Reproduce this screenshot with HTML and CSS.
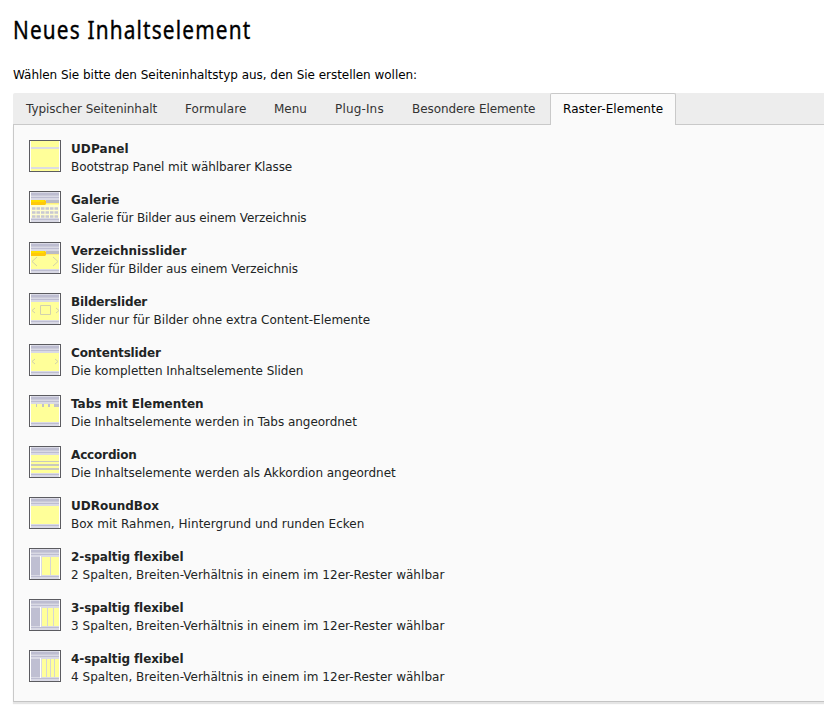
FILE: index.html
```
<!DOCTYPE html>
<html lang="de">
<head>
<meta charset="utf-8">
<title>Neues Inhaltselement</title>
<link rel="stylesheet" href="styles.css">
</head>
<body>
<svg class="defs" aria-hidden="true">
  <defs>
    <g id="frame">
      <rect x=".5" y=".5" width="31" height="31" fill="#fff" stroke="#5b5b60"/>
      <path fill="#d9d9e5" d="M2 1h28v30H2z"/>
      <path fill="#bdbdd1" d="M2 2h28v2H2zM2 6h28v1H2zM2 28h28v1H2z"/>
      <path fill="#cacad8" d="M2 4h28v1H2z"/>
    </g>
    <g id="page">
      <use href="#frame"/>
      <path fill="#ffff99" d="M2 9h28v18H2z"/>
    </g>
    <g id="folder">
      <path fill="#bbbbc5" d="M17 9h13v3H17z"/>
      <path fill="#ffee80" d="M2 12h28v1H2z"/>
      <path fill="#ffc90b" d="M2 9h14l1 1v3l-1 1H2z"/>
      <path fill="#ffe000" d="M2 9h13v2H2z"/>
    </g>
    <g id="columns">
      <use href="#frame"/>
      <path fill="#bfbfd2" d="M2 9h9v18H2z"/>
      <path fill="#fff" d="M11 8h1v20h-1z"/>
      <path fill="#ffff99" d="M13 9h17v18H13z"/>
    </g>
  </defs>
</svg>
<h1>Neues Inhaltselement</h1>
<p class="intro">Wählen Sie bitte den Seiteninhaltstyp aus, den Sie erstellen wollen:</p>
<nav class="tabs">
  <a class="tab t1">Typischer Seiteninhalt</a>
  <a class="tab t2">Formulare</a>
  <a class="tab t3">Menu</a>
  <a class="tab t4">Plug-Ins</a>
  <a class="tab t5">Besondere Elemente</a>
  <a class="tab active">Raster-Elemente</a>
</nav>
<main class="panel">
  <div class="item"><svg class="icon" viewBox="0 0 32 32"><rect x=".5" y=".5" width="31" height="31" fill="#fff" stroke="#5b5b60"/><path fill="#ffff99" d="M2 1h28v30H2z"/><path fill="#dcdce2" d="M2 7h28v2H2zM2 27h28v2H2z"/></svg><div><b class="loose">UDPanel</b><span class="tight">Bootstrap Panel mit wählbarer Klasse</span></div></div>
  <div class="item"><svg class="icon" viewBox="0 0 32 32"><use href="#page"/><path fill="#fffdd0" d="M2 14h28v13H2z"/><use href="#folder"/><path d="M3 17.500h27M3 21.500h27M3 25.500h27" stroke="#c8c8d2" stroke-width="2.500" stroke-dasharray="3.500 1"/></svg><div><b>Galerie</b><span class="tighter">Galerie für Bilder aus einem Verzeichnis</span></div></div>
  <div class="item"><svg class="icon" viewBox="0 0 32 32"><use href="#page"/><use href="#folder"/><path d="M8 15l-5 4.500 5 4.500M24 15l5 4.500-5 4.500" fill="none" stroke="#d1d1ae"/></svg><div><b>Verzeichnisslider</b><span class="tighter">Slider für Bilder aus einem Verzeichnis</span></div></div>
  <div class="item"><svg class="icon" viewBox="0 0 32 32"><use href="#page"/><path d="M6 15l-3 2.500L6 20M27 15l3 2.500-3 2.500M11.500 12.500h10v9h-10z" fill="none" stroke="#d1d1ae"/></svg><div><b class="snug">Bilderslider</b><span>Slider nur für Bilder ohne extra Content-Elemente</span></div></div>
  <div class="item"><svg class="icon" viewBox="0 0 32 32"><use href="#page"/><path d="M6 15l-3 2.500L6 20M26 15l3 2.500-3 2.500" fill="none" stroke="#d1d1ae"/></svg><div><b class="snug">Contentslider</b><span class="slight">Die kompletten Inhaltselemente Sliden</span></div></div>
  <div class="item"><svg class="icon" viewBox="0 0 32 32"><use href="#page"/><path fill="#c1c1cb" d="M7 9h1v3H7zM13 9h2v3h-2zM19 9h2v3h-2zM25 9h5v3h-5z"/></svg><div><b class="slight">Tabs mit Elementen</b><span class="slight">Die Inhaltselemente werden in Tabs angeordnet</span></div></div>
  <div class="item"><svg class="icon" viewBox="0 0 32 32"><use href="#page"/><path fill="#c9c9bd" d="M2 15h28v1H2zM2 18h28v2H2zM2 22h28v2H2z"/></svg><div><b class="snug">Accordion</b><span class="slight">Die Inhaltselemente werden als Akkordion angeordnet</span></div></div>
  <div class="item"><svg class="icon" viewBox="0 0 32 32"><use href="#page"/></svg><div><b>UDRoundBox</b><span class="wide">Box mit Rahmen, Hintergrund und runden Ecken</span></div></div>
  <div class="item"><svg class="icon" viewBox="0 0 32 32"><use href="#columns"/><path fill="#d5d5d5" d="M21 9h1v18h-1z"/></svg><div><b class="tight">2-spaltig flexibel</b><span class="wide">2 Spalten, Breiten-Verhältnis in einem im 12er-Rester wählbar</span></div></div>
  <div class="item"><svg class="icon" viewBox="0 0 32 32"><use href="#columns"/><path fill="#d5d5d5" d="M18 9h1v18h-1zM24 9h1v18h-1z"/></svg><div><b class="tight">3-spaltig flexibel</b><span class="wide">3 Spalten, Breiten-Verhältnis in einem im 12er-Rester wählbar</span></div></div>
  <div class="item"><svg class="icon" viewBox="0 0 32 32"><use href="#columns"/><path fill="#d5d5d5" d="M17 9h1v18h-1zM21 9h1v18h-1zM25 9h1v18h-1z"/></svg><div><b class="tight">4-spaltig flexibel</b><span class="wide">4 Spalten, Breiten-Verhältnis in einem im 12er-Rester wählbar</span></div></div>
</main>
</body>
</html>
```
FILE: styles.css
```
* { box-sizing: border-box; }
body {
  margin: 0;
  padding: 12px 0 0 13px;
  height: 728px;
  overflow: hidden;
  background: #fff;
  color: #000;
  font: 12px/18px "DejaVu Sans", Verdana, sans-serif;
}
.defs { display: none; }
h1 {
  margin: 0;
  width: max-content;
  height: 35px;
  font: 400 26px/34px "Noto Sans", sans-serif;
  letter-spacing: 1.45px;
  -webkit-text-stroke: .4px #000;
  transform: scaleX(.8);
  transform-origin: 0 0;
}
.intro { margin: 19px 0 9px; height: 18px; white-space: nowrap; letter-spacing: -.03px; }
.tabs {
  display: flex;
  height: 32px;
  background: #ededed;
  border-bottom: 1px solid #c9c9c9;
  border-radius: 2px 0 0;
}
.tab {
  height: 32px;
  padding: 7px 0 0 13px;
  color: #333;
  white-space: nowrap;
  flex: none;
}
.t1 { width: 159px; letter-spacing: -.04px; }
.t2 { width: 89px; letter-spacing: .1px; }
.t3 { width: 61px; }
.t4 { width: 77px; letter-spacing: .16px; }
.t5 { width: 151px; letter-spacing: -.08px; }
.tab.active {
  width: 126px;
  padding: 6px 0 0 12px;
  background: #fafafa;
  border: 1px solid #c9c9c9;
  border-bottom: 0;
  border-radius: 2px 2px 0 0;
  color: #000;
  letter-spacing: .06px;
}
.panel {
  height: 577px;
  padding: 15px 0 0 15px;
  background: #fafafa;
  border-left: 1px solid #c9c9c9;
  border-bottom: 1px solid #c4c4c4;
  box-shadow: 0 2px 1px #e5e5e5;
  color: #212424;
}
.item { display: flex; gap: 10px; height: 51px; }
.icon { width: 32px; height: 32px; flex: none; }
.item b, .item span { display: block; height: 18px; white-space: nowrap; }
.item .slight { letter-spacing: -.04px; }
.item .tight { letter-spacing: -.09px; }
.item .tighter { letter-spacing: -.12px; }
.item .snug { letter-spacing: -.16px; }
.item .wide { letter-spacing: .035px; }
.item .loose { letter-spacing: .1px; }
```
